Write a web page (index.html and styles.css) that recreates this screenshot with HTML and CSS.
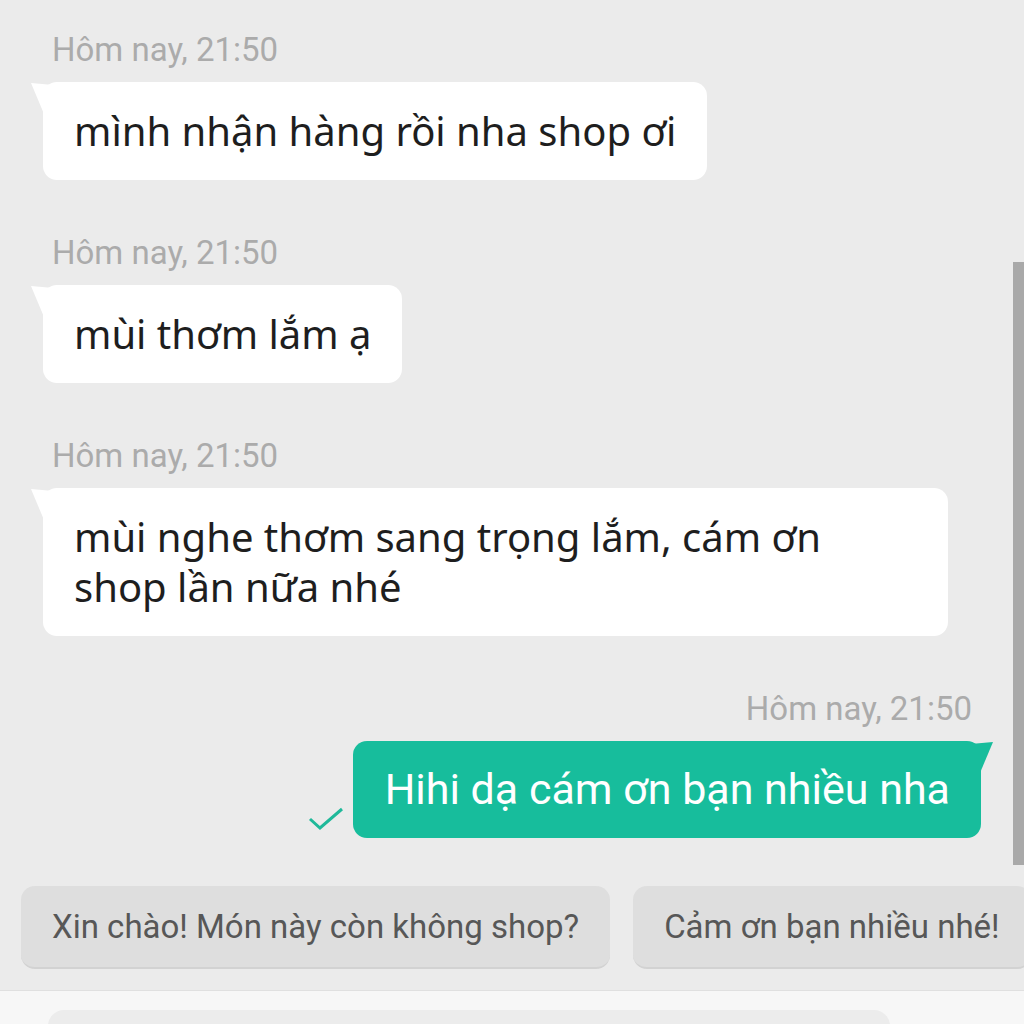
FILE: index.html
```html
<!DOCTYPE html>
<html lang="vi">

<head>
    <meta charset="utf-8">
    <meta name="viewport" content="width=device-width, initial-scale=1.0">
    <title>Chat</title>
    <link rel="stylesheet" href="styles.css">
</head>

<body>

    <main class="chat">
        <div class="msg in">
            <p class="stamp">Hôm nay, 21:50</p>
            <div class="bubble">mình nhận hàng rồi nha shop ơi</div>
        </div>

        <div class="msg in">
            <p class="stamp">Hôm nay, 21:50</p>
            <div class="bubble">mùi thơm lắm ạ</div>
        </div>

        <div class="msg in">
            <p class="stamp">Hôm nay, 21:50</p>
            <div class="bubble">mùi nghe thơm sang trọng lắm, cám ơn shop lần nữa nhé</div>
        </div>

        <div class="msg out">
            <p class="stamp">Hôm nay, 21:50</p>
            <div class="row">
                <svg class="tick" width="36" height="24" viewBox="0 0 36 24">
                    <path d="M2 12 L12 21 L34 2" fill="none" stroke="#1fb99a" stroke-width="3" />
                </svg>
                <div class="bubble">Hihi dạ cám ơn bạn nhiều nha</div>
            </div>
        </div>

        <div class="scrollbar"></div>
    </main>

    <nav class="quick">
        <button>Xin chào! Món này còn không shop?</button>
        <button>Cảm ơn bạn nhiều nhé!</button>
    </nav>

    <footer class="composer">
        <div class="input"></div>
    </footer>

</body>

</html>
```

FILE: styles.css
```css
body {
    margin: 0;
    background-color: #ebebeb;
    font-family: "Noto Sans", sans-serif;
    height: 1024px;
    overflow: hidden;
}

.chat {
    position: relative;
    padding: 30px 43px 0 43px;
    display: flex;
    flex-direction: column;
    gap: 53px;
}

.msg {
    display: flex;
    flex-direction: column;
}

.stamp {
    margin: 0 0 12px 9px;
    font-family: Roboto, sans-serif;
    font-size: 33px;
    line-height: 40px;
    color: #ababab;
}

.bubble {
    position: relative;
    background-color: #ffffff;
    color: #1e1e1e;
    font-size: 40px;
    line-height: 50px;
    padding: 24px 31px;
    border-radius: 14px;
    max-width: 843px;
}

.in .bubble {
    align-self: flex-start;
}

/* tail top-left */
.in .bubble::before {
    content: "";
    position: absolute;
    left: -12px;
    top: 1px;
    width: 28px;
    height: 30px;
    background-color: #ffffff;
    clip-path: polygon(0 0, 100% 8%, 100% 100%, 45% 100%);
}

.out {
    align-items: flex-end;
}

.out .stamp {
    margin: 0 9px 12px 0;
}

.row {
    display: flex;
    align-items: flex-end;
    gap: 9px;
}

.tick {
    margin-bottom: 7px;
}

.out .bubble {
    background-color: #17bd9c;
    color: #ffffff;
    font-family: Roboto, sans-serif;
    font-size: 43px;
    line-height: 49px;
    padding: 24px 31px 24px 32px;
}

/* tail top-right */
.out .bubble::before {
    content: "";
    position: absolute;
    right: -12px;
    top: 1px;
    width: 28px;
    height: 30px;
    background-color: #17bd9c;
    clip-path: polygon(100% 0, 0 8%, 0 100%, 55% 100%);
}

.scrollbar {
    position: absolute;
    right: 0;
    top: 262px;
    width: 11px;
    height: 603px;
    background-color: #a9a9a9;
}

.quick {
    display: flex;
    gap: 23px;
    padding: 48px 0 0 21px;
    white-space: nowrap;
    overflow: hidden;
}

.quick button {
    flex-shrink: 0;
    height: 83px;
    padding: 0 31px;
    border: none;
    border-bottom: 2px solid #d2d2d2;
    border-radius: 14px;
    background-color: #dedede;
    color: #575757;
    font-family: Roboto, sans-serif;
    font-size: 33px;
    text-align: left;
}

.composer {
    margin-top: 21px;
    border-top: 1px solid #e0e0e0;
    background-color: #f7f7f7;
    padding: 19px 0 0 48px;
    height: 60px;
}

.input {
    width: 842px;
    height: 60px;
    border-radius: 16px;
    background-color: #ececec;
}
```
